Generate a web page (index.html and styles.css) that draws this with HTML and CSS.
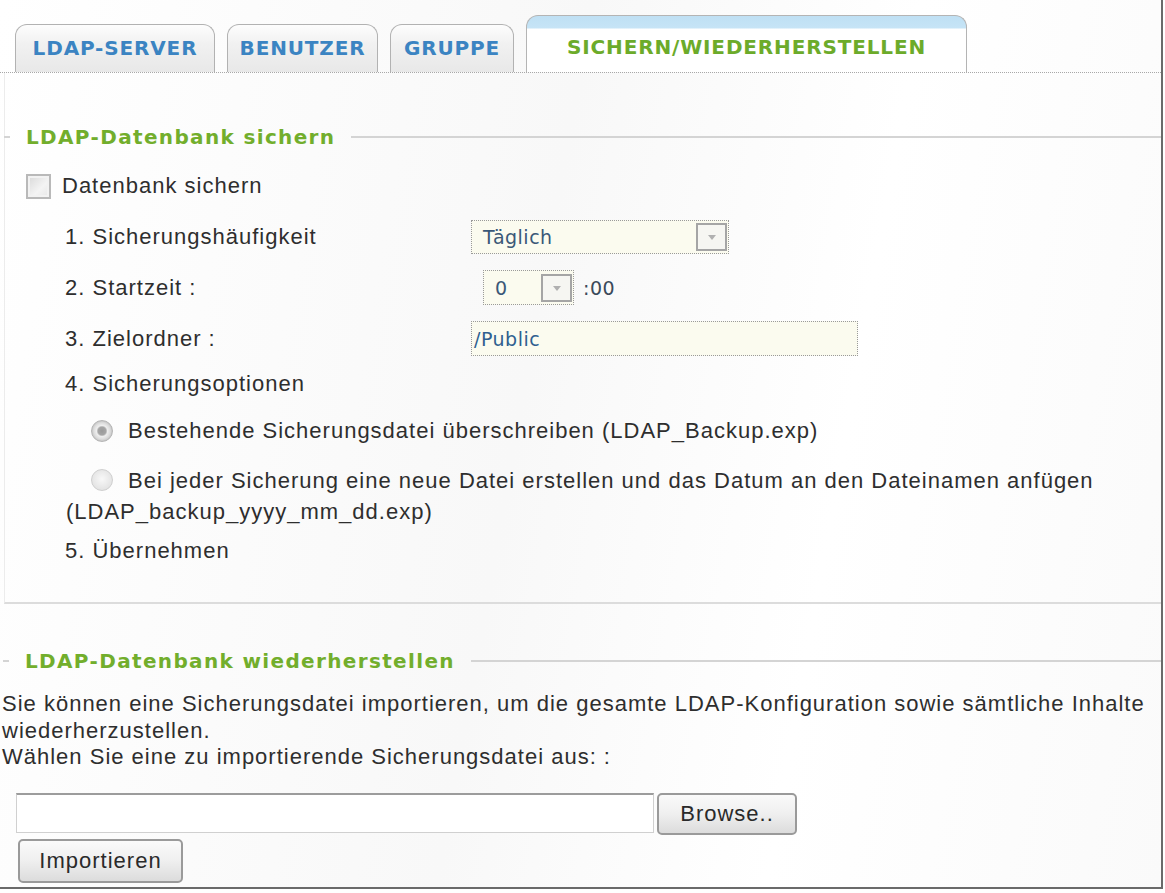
FILE: index.html
```html
<!DOCTYPE html>
<html lang="de">
<head>
<meta charset="utf-8">
<title>LDAP Sichern/Wiederherstellen</title>
<link rel="stylesheet" href="styles.css">
</head>
<body>
<div class="page">
  <div class="tabs">
    <div class="tab t1">LDAP-SERVER</div>
    <div class="tab t2">BENUTZER</div>
    <div class="tab t3">GRUPPE</div>
    <div class="tab active">SICHERN/WIEDERHERSTELLEN</div>
  </div>

  <section class="panel backup">
    <div class="legend"><span class="legend-text">LDAP-Datenbank sichern</span></div>

    <div class="row check-row">
      <span class="checkbox"></span>
      <span>Datenbank sichern</span>
    </div>

    <div class="row item r1">
      <span class="label">1. Sicherungshäufigkeit</span>
      <div class="select sel-wide"><span class="sel-val">Täglich</span><span class="arrow"></span></div>
    </div>

    <div class="row item r2">
      <span class="label">2. Startzeit :</span>
      <div class="select sel-small"><span class="sel-val">0</span><span class="arrow"></span></div>
      <span class="suffix">:00</span>
    </div>

    <div class="row item r3">
      <span class="label">3. Zielordner :</span>
      <div class="textfield">/Public</div>
    </div>

    <div class="row item r4">
      <span class="label">4. Sicherungsoptionen</span>
    </div>

    <div class="row radio-row">
      <span class="radio checked"></span>
      <span>Bestehende Sicherungsdatei überschreiben (LDAP_Backup.exp)</span>
    </div>

    <p class="radio-para"><span class="radio"></span>Bei jeder Sicherung eine neue Datei erstellen und das Datum an den Dateinamen anfügen (LDAP_backup_yyyy_mm_dd.exp)</p>

    <div class="row item r5">
      <span class="label">5. Übernehmen</span>
    </div>
  </section>

  <section class="panel restore">
    <div class="legend"><span class="legend-text">LDAP-Datenbank wiederherstellen</span></div>
    <p class="info">Sie können eine Sicherungsdatei importieren, um die gesamte LDAP-Konfiguration sowie sämtliche Inhalte wiederherzustellen.<br>Wählen Sie eine zu importierende Sicherungsdatei aus: :</p>
    <div class="file-row">
      <div class="filefield"></div>
      <button class="btn browse" type="button">Browse..</button>
    </div>
    <button class="btn import" type="button">Importieren</button>
  </section>
</div>
</body>
</html>
```

FILE: styles.css
```css
html, body {
  margin: 0;
  padding: 0;
  background: #ffffff;
}

body {
  font-family: "Liberation Sans", Arial, sans-serif;
  font-size: 22px;
  letter-spacing: 1px;
  color: #2e2e2e;
}

.page {
  width: 1161px;
  height: 887px;
  border-right: 2px solid #6a6a6a;
  border-bottom: 2px solid #6a6a6a;
  background: linear-gradient(100deg, #ffffff 0%, #f8f8f8 45%, #ffffff 70%, #fafafa 100%);
  display: flex;
  flex-direction: column;
}

/* ---------- Tabs ---------- */
.tabs {
  display: flex;
  align-items: flex-end;
  gap: 12px;
  padding: 15px 0 0 15px;
  border-bottom: 1px dotted #a8a8a8;
  height: 57px;
}

.tab {
  box-sizing: border-box;
  height: 48px;
  border: 1px solid #b2b2b2;
  border-bottom: none;
  border-radius: 12px 12px 0 0;
  background: linear-gradient(#fdfdfd 0%, #f1f1f1 40%, #e8e8e8 100%);
  font-family: "DejaVu Sans", Verdana, sans-serif;
  font-weight: bold;
  font-size: 20px;
  letter-spacing: 0.85px;
  color: #3b84c2;
  display: flex;
  align-items: center;
  justify-content: center;
  padding-bottom: 2px;
}

.t1 { width: 200px; }
.t2 { width: 151px; }
.t3 { width: 124px; }

.tab.active {
  width: 441px;
  height: 57px;
  background: linear-gradient(#bfe0f4 0px, #c6e4f6 12px, #ffffff 13px, #ffffff 100%);
  color: #6cab2a;
  padding-top: 8px;
  border-color: #b4b4b4;
}

/* ---------- Panels ---------- */
.panel {
  box-sizing: border-box;
}

.backup {
  padding: 49px 0 31px 0;
  border-bottom: 2px solid #dcdcdc;
  border-left: 1px solid #ececec;
  margin-left: 4px;
}

.restore {
  padding-top: 42px;
  flex: 1;
}

.legend {
  display: flex;
  align-items: center;
  height: 30px;
}

.legend::before {
  content: "";
  width: 6px;
  height: 2px;
  background: #d4d4d4;
  margin: 0 16px 0 0;
}

.legend::after {
  content: "";
  flex: 1;
  height: 2px;
  background: #d4d4d4;
  margin-left: 16px;
}

.backup .legend::before { margin-left: -1px; }
.restore .legend::before { margin-left: 3px; }

.legend-text {
  font-family: "DejaVu Sans", Verdana, sans-serif;
  font-weight: bold;
  font-size: 20px;
  letter-spacing: 1.35px;
  color: #72ae2c;
}

.row {
  display: flex;
  align-items: center;
}

.check-row {
  height: 40px;
  margin-top: 14px;
  padding-left: 21px;
}

.checkbox {
  box-sizing: border-box;
  width: 25px;
  height: 25px;
  border: 2px solid #b9b9b9;
  background: linear-gradient(135deg, #d8d8d8, #f4f4f4 60%, #e6e6e6);
  box-shadow: inset 0 0 0 2px #f2f2f2;
  margin-right: 11px;
}

.item {
  padding-left: 60px;
}

.label {
  width: 406px;
  flex: none;
}

.r1 { height: 50px; margin-top: 6px; }
.r2 { height: 51px; }
.r3 { height: 51px; }
.r4 { height: 40px; }
.r5 { height: 40px; margin-top: 4px; }

.select {
  box-sizing: border-box;
  height: 34px;
  border: 1px dotted #9a9a9a;
  background: #fbfbef;
  display: flex;
  align-items: center;
  justify-content: space-between;
  padding: 0 1px 0 11px;
  font-family: "DejaVu Sans", Verdana, sans-serif;
  font-size: 19px;
  letter-spacing: 0.5px;
  color: #3a5878;
}

.sel-wide { width: 258px; }

.sel-small {
  width: 91px;
  height: 35px;
  margin-left: 12px;
}

.arrow {
  box-sizing: border-box;
  width: 31px;
  height: 28px;
  border: 2px solid #a5a5a5;
  background: #f6f6f2;
  position: relative;
}

.arrow::after {
  content: "";
  position: absolute;
  left: 50%;
  top: 50%;
  margin: -2px 0 0 -4px;
  border-left: 4px solid transparent;
  border-right: 4px solid transparent;
  border-top: 5px solid #b0b0b0;
}

.suffix {
  margin-left: 9px;
  font-family: "DejaVu Sans", Verdana, sans-serif;
  font-size: 19px;
  letter-spacing: 0.5px;
  color: #3a4a5a;
}

.textfield {
  box-sizing: border-box;
  width: 387px;
  height: 35px;
  border: 1px dotted #9a9a9a;
  background: #fbfbef;
  display: flex;
  align-items: center;
  padding-left: 2px;
  font-family: "DejaVu Sans", Verdana, sans-serif;
  font-size: 19px;
  letter-spacing: 0.5px;
  color: #2f5f90;
}

.radio {
  display: inline-block;
  box-sizing: border-box;
  width: 22px;
  height: 22px;
  border-radius: 50%;
  border: 1px solid #cfcfcf;
  background: radial-gradient(circle at 50% 45%, #f8f8f8 0%, #e4e4e4 70%, #d6d6d6 100%);
  vertical-align: -3px;
}

.radio.checked {
  border-color: #b5b5b5;
  background: radial-gradient(circle, #9a9a9a 0px, #a6a6a6 4px, #eeeeee 5.5px, #dedede 8px, #c8c8c8 10px);
}

.radio-row {
  height: 44px;
  margin-top: 5px;
  padding-left: 86px;
}

.radio-row .radio {
  margin-right: 15px;
}

.radio-para {
  margin: 12px 0 0 0;
  padding-left: 61px;
  text-indent: 25px;
  line-height: 31px;
}

.radio-para .radio {
  margin-right: 15px;
  text-indent: 0;
}

.info {
  margin: 15px 0 0 0;
  padding-left: 2px;
  line-height: 26.5px;
}

.file-row {
  display: flex;
  align-items: flex-start;
  margin-top: 22px;
  padding-left: 16px;
  height: 42px;
}

.filefield {
  box-sizing: border-box;
  width: 638px;
  height: 40px;
  background: #ffffff;
  border: 1px solid #d0d0d0;
  border-top: 2px solid #9c9c9c;
}

.btn {
  box-sizing: border-box;
  font-family: "Liberation Sans", Arial, sans-serif;
  font-size: 22px;
  letter-spacing: 1px;
  color: #2a2a2a;
  border: 2px solid #9a9a9a;
  border-radius: 5px;
  background: linear-gradient(#fafafa 0%, #efefef 50%, #dcdcdc 100%);
  padding: 0;
}

.browse {
  width: 140px;
  height: 42px;
  margin-left: 3px;
}

.import {
  display: block;
  width: 165px;
  height: 44px;
  margin: 4px 0 0 18px;
}
```
